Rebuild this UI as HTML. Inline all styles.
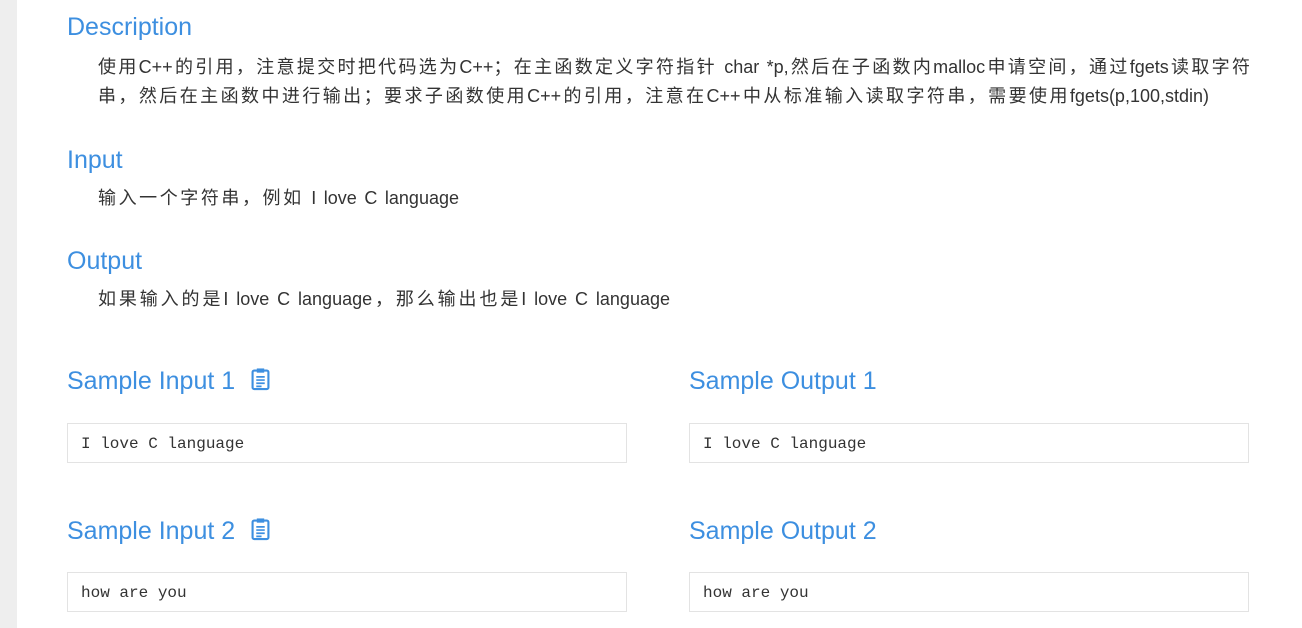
<!DOCTYPE html>
<html><head><meta charset="utf-8"><style>
body{margin:0;width:1302px;height:628px;background:#fff;position:relative;overflow:hidden;font-family:"Liberation Sans","Noto Sans CJK SC",sans-serif;}
.bar{position:absolute;left:0;top:0;width:17px;height:628px;background:#eeeeee;}
.h{position:absolute;color:#3d8fe0;font-size:25px;line-height:30px;white-space:nowrap;}
.t{position:absolute;left:98px;color:#333;font-size:18px;line-height:29px;white-space:nowrap;text-align:justify;text-align-last:justify;text-justify:inter-character;}
.box{position:absolute;height:38px;border:1px solid #e3e3e3;background:#fff;font-family:"Liberation Mono","DejaVu Sans Mono",monospace;font-size:16px;color:#333;line-height:40px;padding-left:13px;box-sizing:content-box;}
.ic{display:inline-block;vertical-align:-2px;margin-left:16px;}
</style></head><body>
<div class="bar"></div>
<div class="h" style="left:67px;top:12px">Description</div>
<div class="t" style="top:53px;width:1152px">使用C++的引用，注意提交时把代码选为C++；在主函数定义字符指针 char *p,然后在子函数内malloc申请空间，通过fgets读取字符</div>
<div class="t" style="top:82px;width:1111px">串，然后在主函数中进行输出；要求子函数使用C++的引用，注意在C++中从标准输入读取字符串，需要使用fgets(p,100,stdin)</div>
<div class="h" style="left:67px;top:145px">Input</div>
<div class="t" style="top:184px;width:361px">输入一个字符串，例如 I love C language</div>
<div class="h" style="left:67px;top:246px">Output</div>
<div class="t" style="top:285px;width:572px">如果输入的是I love C language，那么输出也是I love C language</div>
<div class="h" style="left:67px;top:366px">Sample Input 1<svg class="ic" width="19" height="24" viewBox="0 0 18 22"><rect x="1.5" y="3" width="15" height="17.5" rx="1.5" fill="none" stroke="#3d8fe0" stroke-width="2"/><rect x="5.5" y="1" width="7" height="4" fill="#3d8fe0"/><path d="M5 9h8M5 12h8M5 15h8M5 18h5" stroke="#3d8fe0" stroke-width="1.6"/></svg></div>
<div class="h" style="left:689px;top:366px">Sample Output 1</div>
<div class="box" style="left:67px;top:423px;width:545px">I love C language</div>
<div class="box" style="left:689px;top:423px;width:545px">I love C language</div>
<div class="h" style="left:67px;top:516px">Sample Input 2<svg class="ic" width="19" height="24" viewBox="0 0 18 22"><rect x="1.5" y="3" width="15" height="17.5" rx="1.5" fill="none" stroke="#3d8fe0" stroke-width="2"/><rect x="5.5" y="1" width="7" height="4" fill="#3d8fe0"/><path d="M5 9h8M5 12h8M5 15h8M5 18h5" stroke="#3d8fe0" stroke-width="1.6"/></svg></div>
<div class="h" style="left:689px;top:516px">Sample Output 2</div>
<div class="box" style="left:67px;top:572px;width:545px">how are you</div>
<div class="box" style="left:689px;top:572px;width:545px">how are you</div>
</body></html>
